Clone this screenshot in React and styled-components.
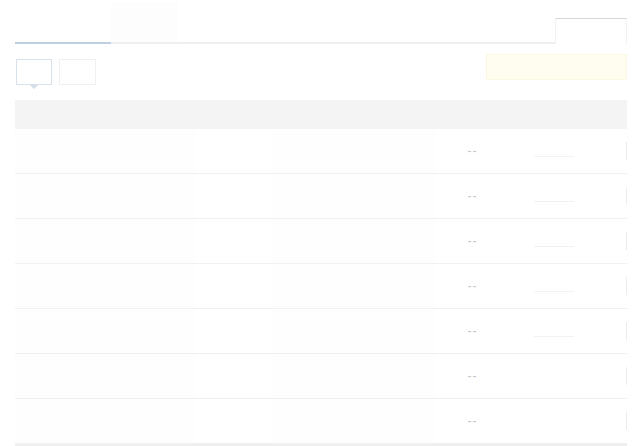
import React from 'react';
import styled, { createGlobalStyle } from 'styled-components';

const Global = createGlobalStyle`
  html, body { margin: 0; padding: 0; background: #fff; }
  body { font-family: "Liberation Sans", Arial, sans-serif; overflow: hidden; }
`;

const Page = styled.div`
  width: 640px;
  height: 446px;
  padding: 0 13px 0 15px;
  box-sizing: border-box;
  overflow: hidden;
`;

const TabBar = styled.div`
  display: flex;
  align-items: flex-end;
  height: 44px;
`;

const Tab = styled.div`
  width: ${(p) => p.$w}px;
  height: ${(p) => (p.$active ? 41 : 40)}px;
  border-bottom: ${(p) => (p.$active ? '2px solid #bdd0e2' : '2px solid #efefef')};
  background: ${(p) => (p.$shade ? '#fdfdfd' : 'transparent')};
`;

const TabFill = styled.div`
  flex: 1;
  border-bottom: 2px solid #efefef;
`;

const SideTab = styled.div`
  width: 72px;
  height: 26px;
  border: 1px solid #f2f2f2;
  border-top: 1px solid #d6d6d6;
  border-bottom: none;
  box-sizing: border-box;
`;

const Toolbar = styled.div`
  display: flex;
  align-items: flex-start;
  justify-content: space-between;
  margin-top: 10px;
  height: 46px;
`;

const Views = styled.div`
  display: flex;
  gap: 7px;
  padding-top: 5px;
`;

const ViewBtn = styled.div`
  position: relative;
  width: ${(p) => p.$w}px;
  height: 26px;
  box-sizing: border-box;
  border: 1px solid ${(p) => (p.$active ? '#d9e2ec' : '#f0f0f0')};
  margin-left: ${(p) => (p.$active ? 1 : 0)}px;

  ${(p) =>
    p.$active &&
    `&::after {
      content: '';
      position: absolute;
      left: 13px;
      bottom: -5px;
      border-left: 4px solid transparent;
      border-right: 4px solid transparent;
      border-top: 4px solid #d4dee9;
    }`}
`;

const Notice = styled.div`
  width: 141px;
  height: 26px;
  box-sizing: border-box;
  background: #fffdf0;
  border: 1px solid #fcf7e2;
`;

const Table = styled.div`
  display: flex;
  flex-direction: column;
`;

const Head = styled.div`
  height: 29px;
  background: #f4f4f4;
`;

const Row = styled.div`
  display: grid;
  grid-template-columns: 180px 77px 163px 79px 1fr 10px;
  height: 44px;
  border-bottom: 1px solid #f1f1f1;
  align-items: center;
  background: #fff;
`;

const Cell = styled.div`
  height: 100%;
  background: ${(p) => p.$bg || 'transparent'};
`;

const Dash = styled.div`
  text-align: center;
  color: #c4c4c4;
  font-size: 12px;
  letter-spacing: 1px;
  padding-right: 4px;
`;

const LinkCell = styled.div`
  display: flex;
  align-items: center;
  height: 100%;
  padding-left: 20px;
  padding-top: 10px;
  box-sizing: border-box;
`;

const LinkLine = styled.div`
  width: 40px;
  border-bottom: 1px solid #f2f2f2;
`;

const Edge = styled.div`
  justify-self: end;
  width: 2px;
  height: 18px;
  border-right: 1px solid #ececec;
`;

const Footer = styled.div`
  height: 4px;
  background: #efefef;
`;

const rows = [0, 1, 2, 3, 4, 5, 6];

export default function App() {
  return (
    <Page>
      <Global />
      <TabBar>
        <Tab $w={96} $active />
        <Tab $w={67} $shade />
        <TabFill />
        <SideTab />
      </TabBar>
      <Toolbar>
        <Views>
          <ViewBtn $w={36} $active />
          <ViewBtn $w={37} />
        </Views>
        <Notice />
      </Toolbar>
      <Table>
        <Head />
        {rows.map((i) => (
          <Row key={i}>
            <Cell $bg="#fefefe" />
            <Cell />
            <Cell $bg="#fefefe" />
            <Dash>--</Dash>
            <LinkCell>{i < 5 && <LinkLine />}</LinkCell>
            <Edge />
          </Row>
        ))}
        <Footer />
      </Table>
    </Page>
  );
}
